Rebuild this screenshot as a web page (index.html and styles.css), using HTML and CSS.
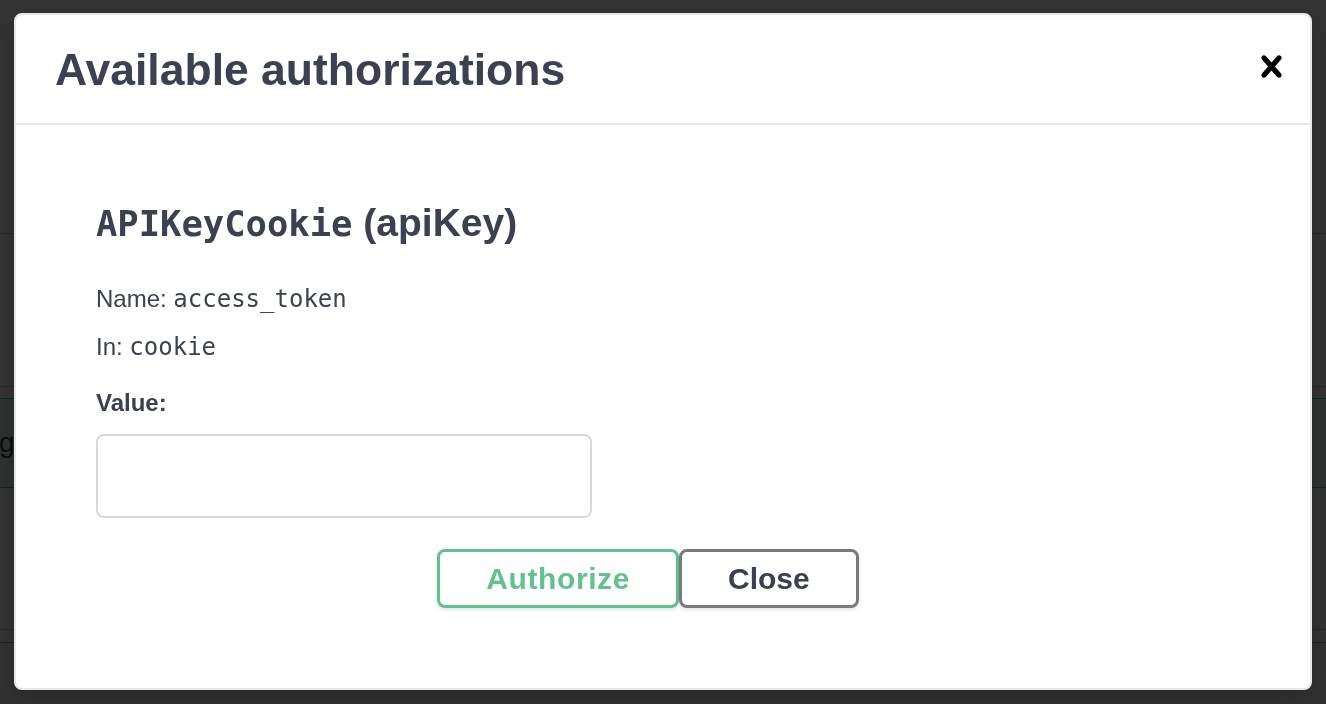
FILE: index.html
```html
<!DOCTYPE html>
<html lang="en">
<head>
<meta charset="utf-8">
<title>Available authorizations</title>
<link rel="stylesheet" href="styles.css">
</head>
<body>
  <div class="page">
    <div class="page-top"></div>
    <div class="tag-row"></div>
    <div class="opblock opblock-post"><span class="op-path">g</span></div>
    <div class="tag-row tag-row-short"></div>
    <div class="opblock opblock-get"></div>
  </div>

  <div class="backdrop">
    <div class="modal" role="dialog" aria-labelledby="modal-title">
      <div class="modal-header">
        <h3 class="modal-title" id="modal-title">Available authorizations</h3>
        <button class="close-modal" type="button" aria-label="Close">
          <svg class="close-icon" viewBox="0 0 20 20" aria-hidden="true"><path d="M14.348 14.849c-.469.469-1.229.469-1.697 0L10 11.819l-2.651 3.029c-.469.469-1.229.469-1.697 0-.469-.469-.469-1.229 0-1.697l2.758-3.15-2.759-3.152c-.469-.469-.469-1.228 0-1.697.469-.469 1.228-.469 1.697 0L10 8.183l2.651-3.031c.469-.469 1.228-.469 1.697 0 .469.469.469 1.229 0 1.697l-2.758 3.152 2.758 3.15c.469.469.469 1.229 0 1.698z"/></svg>
        </button>
      </div>
      <div class="modal-body">
        <h4 class="auth-title"><code class="auth-code">APIKeyCookie</code> (apiKey)</h4>
        <p class="auth-line">Name: <code class="line-code">access_token</code></p>
        <p class="auth-line">In: <code class="line-code">cookie</code></p>
        <label class="value-label" for="api-value">Value:</label>
        <input class="value-input" id="api-value" type="text">
        <div class="btn-wrapper">
          <button class="btn btn-authorize" type="button">Authorize</button>
          <button class="btn btn-close" type="button">Close</button>
        </div>
      </div>
    </div>
  </div>
</body>
</html>
```

FILE: styles.css
```css
html, body {
  margin: 0;
  padding: 0;
}

body {
  background: #ffffff;
  font-family: "Liberation Sans", Arial, sans-serif;
  color: #3b4151;
  overflow: hidden;
}

/* page behind the overlay */
.page {
  display: flex;
  flex-direction: column;
  height: 704px;
}

.page-top {
  height: 233px;
  border-bottom: 1px solid rgba(59, 65, 81, 0.3);
  flex: none;
}

.tag-row {
  height: 152px;
  border-bottom: 1px solid rgba(59, 65, 81, 0.3);
  flex: none;
}

.tag-row-short {
  height: 131px;
  margin-top: 10px;
}

.opblock {
  flex: none;
  border-top: 1px solid;
  border-bottom: 1px solid;
  margin-top: 11px;
}

.opblock-post {
  height: 88px;
  border-color: #49cc90;
  background: rgba(73, 204, 144, 0.1);
  display: flex;
  align-items: center;
}

.opblock-get {
  flex: 1;
  margin-top: 12px;
  border-color: #61affe;
  border-bottom: none;
  background: rgba(97, 175, 254, 0.06);
}

.op-path {
  font-size: 28px;
  color: #3b4151;
  margin-left: -1px;
}

/* overlay + modal */
.backdrop {
  position: fixed;
  inset: 0;
  background: rgba(0, 0, 0, 0.8);
  padding: 13px 14px;
}

.modal {
  background: #ffffff;
  border: 2px solid #e8e8e8;
  border-radius: 8px;
  box-shadow: 0 10px 30px rgba(0, 0, 0, 0.2);
}

.modal-header {
  box-sizing: border-box;
  height: 110px;
  padding: 3px 17px 0 39px;
  border-bottom: 2px solid #e8e8e8;
  display: flex;
  align-items: center;
  justify-content: space-between;
}

.modal-title {
  margin: 0;
  font-size: 44.5px;
  line-height: 1;
  font-weight: 700;
  color: #3b4151;
}

.close-modal {
  border: none;
  background: none;
  padding: 0;
  margin: 0 0 8px 0;
  width: 43px;
  height: 43px;
  cursor: pointer;
}

.close-icon {
  display: block;
  width: 43px;
  height: 43px;
  fill: #000000;
}

.modal-body {
  padding: 74px 80px 80px 80px;
}

.auth-title {
  margin: 0 0 27px 0;
  font-size: 39px;
  line-height: 48px;
  font-weight: 700;
  color: #3b4151;
}

.auth-code {
  font-family: "DejaVu Sans Mono", "Liberation Mono", monospace;
  font-size: 35.5px;
  font-weight: 700;
}

.auth-line {
  margin: 0;
  font-size: 24px;
  line-height: 48px;
  color: #3b4151;
}

.line-code {
  font-family: "DejaVu Sans Mono", "Liberation Mono", monospace;
  font-size: 24px;
}

.value-label {
  display: block;
  margin-top: 8px;
  font-size: 24px;
  line-height: 48px;
  font-weight: 700;
  color: #3b4151;
}

.value-input {
  display: block;
  box-sizing: border-box;
  margin: 7px 0 0 0;
  width: 496px;
  height: 84px;
  padding: 16px 20px;
  border: 2px solid #d9d9d9;
  border-radius: 8px;
  background: #ffffff;
  font: 26px "Liberation Sans", Arial, sans-serif;
  color: #3b4151;
  outline: none;
}

.btn-wrapper {
  display: flex;
  justify-content: center;
  margin-top: 31px;
}

.btn {
  font-family: "Liberation Sans", Arial, sans-serif;
  font-size: 30px;
  line-height: 35px;
  font-weight: 700;
  padding: 9px 46px;
  border: 3px solid #7a7a7a;
  border-radius: 8px;
  background: #ffffff;
  color: #3b4151;
  box-shadow: 0 2px 4px rgba(0, 0, 0, 0.1);
  cursor: pointer;
}

.btn-authorize {
  border-color: #62c28e;
  color: #62c28e;
  letter-spacing: 0.6px;
}

.btn-close {
  margin-right: 30px;
}
```
